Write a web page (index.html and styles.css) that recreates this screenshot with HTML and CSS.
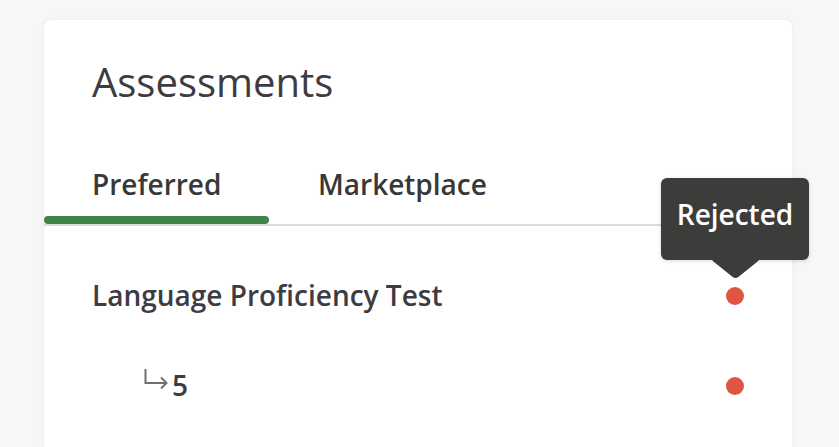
FILE: index.html
```html
<!DOCTYPE html>
<html>
<head>
<meta charset="utf-8">
<link rel="stylesheet" href="styles.css">
</head>
<body>
<div class="page">
  <section class="card">
    <h1 class="title">Assessments</h1>
    <nav class="tabs">
      <div class="tab active">Preferred</div>
      <div class="tab">Marketplace</div>
    </nav>
    <ul class="list">
      <li class="row">
        <span class="name">Language Proficiency Test</span>
        <span class="dot">
          <span class="tooltip">Rejected</span>
        </span>
      </li>
      <li class="row sub">
        <span class="name"><svg class="arrow" width="24" height="22" viewBox="0 0 24 22"><path d="M1.5 1 V15 H22.5 M17 9.5 L22.5 15 L17 20.5" fill="none" stroke="#707070" stroke-width="2"/></svg>5</span>
        <span class="dot"></span>
      </li>
    </ul>
  </section>
</div>
</body>
</html>
```
FILE: styles.css
```css
html, body {
  margin: 0;
  padding: 0;
  background: #f7f7f7;
  font-family: "Open Sans", "Noto Sans", sans-serif;
  overflow: hidden;
}
.page {
  padding: 20px 0 0 44px;
}
.card {
  width: 748px;
  height: 427px;
  background: #fff;
  border-radius: 8px 8px 0 0;
  box-shadow: 0 0 6px rgba(0,0,0,0.06);
  box-sizing: border-box;
}
.title {
  margin: 0;
  padding: 38px 0 0 48px;
  font-size: 40px;
  font-weight: 400;
  line-height: 48px;
  color: #3e3b42;
}
.tabs {
  display: flex;
  margin-top: 54px;
  border-bottom: 2px solid #dcdcdc;
}
.tab {
  width: 225px;
  box-sizing: border-box;
  padding: 0 0 0 48px;
  height: 64px;
  font-size: 28px;
  font-weight: 600;
  line-height: 48px;
  color: #383838;
  position: relative;
}
.tab + .tab { padding-left: 49px; }
.tab.active::after {
  content: "";
  position: absolute;
  left: 0;
  right: 0;
  bottom: 0;
  height: 8px;
  border-radius: 4px;
  background: #42834a;
}
.list {
  list-style: none;
  margin: 0;
  padding: 0 48px;
}
.row {
  display: flex;
  align-items: center;
  justify-content: space-between;
  height: 90px;
}
.row:first-child { margin-top: 24px; }
.name {
  font-size: 28px;
  font-weight: 600;
  color: #3e3b42;
  line-height: 36px;
}
.sub .name {
  padding-left: 52px;
  display: flex;
  align-items: flex-start;
}
.arrow {
  margin: 1px 4px 0 0;
  flex: none;
}
.dot {
  width: 18px;
  height: 18px;
  border-radius: 50%;
  background: #e05541;
  position: relative;
  margin-top: 2px;
}
.tooltip {
  position: absolute;
  bottom: 45px;
  left: 50%;
  transform: translateX(-50%);
  width: 148px;
  height: 82px;
  box-sizing: border-box;
  background: #3c3d3b;
  color: #fff;
  border-radius: 6px;
  font-size: 28px;
  font-weight: 600;
  line-height: 72px;
  text-align: center;
  box-shadow: 0 1px 4px rgba(0,0,0,0.15);
}
.tooltip::after {
  content: "";
  position: absolute;
  left: 50%;
  top: 100%;
  margin-left: -16.5px;
  margin-top: -16.5px;
  width: 33px;
  height: 33px;
  background: #3c3d3b;
  transform: scaleY(0.8) rotate(45deg);
  border-radius: 0 0 4px 0;
  z-index: -1;
}
```
